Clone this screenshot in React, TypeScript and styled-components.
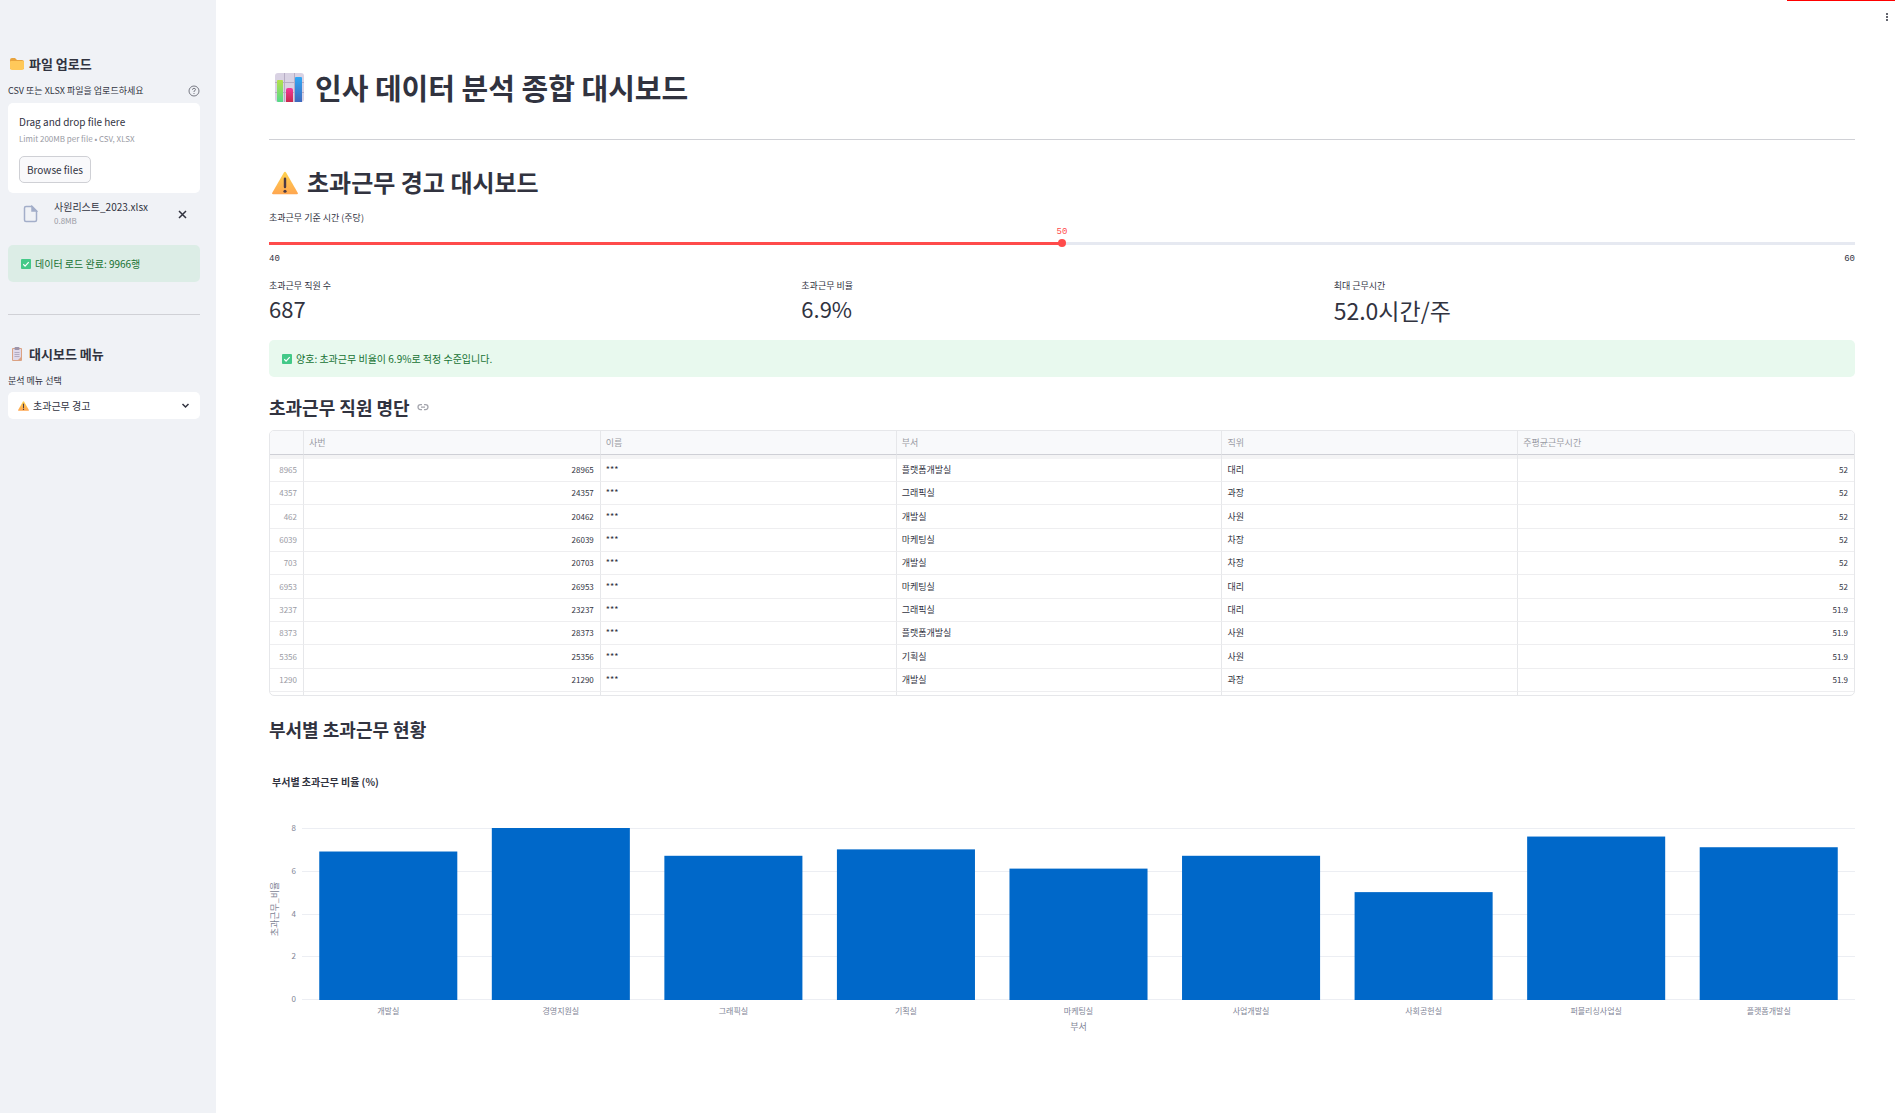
import React, { useState } from "react";
import styled, { createGlobalStyle } from "styled-components";

const ink = "#31333f";
const muted = "#9a9ba4";
const line = "#e6e7ea";
const sans = '"Noto Sans CJK KR", "Noto Sans", sans-serif';

const GlobalStyle = createGlobalStyle`
  *, *::before, *::after { box-sizing: border-box; }
  body { margin: 0; background: #fff; color: ${ink}; font: 10px/16px ${sans}; }
  h1, h2, h3, p { margin: 0; }
  button, input, select { font: inherit; color: inherit; margin: 0; }
`;

const Page = styled.div`
  display: flex;
  min-height: 100vh;
`;

const Sidebar = styled.aside`
  flex: 0 0 216px;
  background: #f0f2f6;
  padding: 54px 16px 0 8px;
`;

const Main = styled.main`
  flex: 1;
  min-width: 0;
  padding: 66px 43px 40px 53px;
`;

const TopBar = styled.div`
  position: absolute;
  top: 0;
  right: 3px;
  width: 108px;
  display: flex;
  justify-content: flex-end;
  border-top: 1px solid #ff0000;
`;

const MenuButton = styled.button`
  border: 0;
  background: none;
  padding: 8px 6px;
  display: flex;
`;

const SideTitle = styled.h2`
  display: flex;
  align-items: center;
  gap: 4px;
  font-size: 13px;
  line-height: 20px;
  font-weight: 700;
`;

const LabelRow = styled.div`
  display: flex;
  justify-content: space-between;
  align-items: center;
  margin-top: 9px;
`;

const FieldLabel = styled.label`
  display: block;
  font-size: 9px;
  line-height: 16px;
`;

const DropZone = styled.div`
  margin-top: 4px;
  height: 90px;
  padding: 11px;
  background: #fff;
  border-radius: 5px;
`;

const DropText = styled.p`
  font-size: 10px;
  line-height: 16px;
`;

const Small = styled.p`
  font-size: 8px;
  line-height: 18px;
  color: ${muted};
`;

const BrowseButton = styled.button`
  display: block;
  margin-top: 8px;
  height: 27px;
  padding: 0 7px;
  background: #f9f9fb;
  border: 1px solid #cfd0d5;
  border-radius: 5px;
  font-size: 10px;
`;

const FileRow = styled.div`
  display: flex;
  align-items: center;
  padding: 7px 11px 0 15px;
  gap: 16px;
`;

const FileInfo = styled.div`
  flex: 1;
`;

const FileName = styled.p`
  font-size: 10px;
  line-height: 14px;
`;

const FileSize = styled.p`
  font-size: 8px;
  line-height: 14px;
  color: ${muted};
`;

const IconButton = styled.button`
  border: 0;
  background: none;
  padding: 0;
  display: flex;
`;

const Notice = styled.div<{ $side?: boolean }>`
  display: flex;
  align-items: center;
  gap: 4px;
  height: 37px;
  padding: 0 13px;
  border-radius: 5px;
  font-size: 10px;
  color: #177233;
  background: ${(p) => (p.$side ? "#dcede6" : "#e8f9ee")};
  margin-top: ${(p) => (p.$side ? 17 : 13)}px;
`;

const Rule = styled.hr<{ $top: number; $bottom: number }>`
  border: 0;
  height: 1px;
  background: #d0d1d6;
  margin: ${(p) => p.$top}px 0 ${(p) => p.$bottom}px;
`;

const SelectBox = styled.div`
  margin-top: 3px;
  height: 27px;
  display: flex;
  align-items: center;
  gap: 4px;
  padding: 0 10px;
  background: #fff;
  border-radius: 5px;
`;

const Select = styled.select`
  flex: 1;
  min-width: 0;
  appearance: none;
  border: 0;
  background: none;
  padding: 0;
  font-size: 10px;
  line-height: 20px;
`;

const Title = styled.h1`
  display: flex;
  align-items: center;
  gap: 8px;
  font-size: 29px;
  line-height: 42px;
  font-weight: 700;
`;

const Section = styled.h2`
  display: flex;
  align-items: center;
  gap: 9px;
  padding-left: 3px;
  font-size: 24px;
  line-height: 36px;
  font-weight: 700;
`;

const SubSection = styled.h3<{ $top: number }>`
  display: flex;
  align-items: center;
  gap: 7px;
  margin-top: ${(p) => p.$top}px;
  font-size: 18px;
  line-height: 28px;
  font-weight: 700;
`;

const SliderBlock = styled.div`
  margin-top: 10px;
`;

const SliderValue = styled.output`
  display: block;
  text-align: center;
  font: 9px/12px "Liberation Mono", monospace;
  color: #ff4b4b;
`;

const Slider = styled.input<{ $fill: number }>`
  display: block;
  width: 100%;
  height: 8px;
  margin: 1px 0 4px;
  appearance: none;
  background: linear-gradient(to right, #ff4b4b ${(p) => p.$fill}%, #e6e9f1 ${(p) => p.$fill}%) center / 100% 3px no-repeat;
  &::-webkit-slider-thumb {
    appearance: none;
    width: 8px;
    height: 8px;
    border-radius: 50%;
    background: #ff4b4b;
  }
`;

const SliderEnds = styled.div`
  display: flex;
  justify-content: space-between;
  font: 9px/16px "Liberation Mono", monospace;
`;

const Metrics = styled.div`
  display: grid;
  grid-template-columns: repeat(3, 1fr);
  gap: 11px;
  margin-top: 11px;
`;

const MetricLabel = styled.p`
  font-size: 9px;
  line-height: 16px;
`;

const MetricValue = styled.p<{ $hangul: boolean }>`
  font-size: ${(p) => (p.$hangul ? 23 : 22)}px;
  line-height: ${(p) => (p.$hangul ? 33 : 28)}px;
`;

const Grid = styled.div`
  margin-top: 9px;
  height: 266px;
  overflow: hidden;
  border: 1px solid ${line};
  border-radius: 5px;
`;

const Table = styled.table`
  width: 100%;
  table-layout: fixed;
  border-collapse: separate;
  border-spacing: 0;
`;

const HeadCell = styled.th`
  height: 24px;
  padding: 0 5px;
  text-align: left;
  font-size: 9px;
  line-height: 16px;
  font-weight: 400;
  color: ${muted};
  background: #f8f9fb;
  border-bottom: 1px solid #cfd0d6;
  &:not(:last-child) { border-right: 1px solid ${line}; }
`;

const Row = styled.tr`
  height: 23px;
  &:nth-child(3n) { height: 24px; }
  &:first-child { height: 27px; }
  &:first-child td { padding-top: 4px; box-shadow: inset 0 4px 0 #f4f4f5; }
`;

const Cell = styled.td<{ $right?: boolean; $muted?: boolean }>`
  padding: 0 ${(p) => (p.$right ? 6 : 5)}px;
  font-size: ${(p) => (p.$right ? 8 : 9)}px;
  line-height: 16px;
  text-align: ${(p) => (p.$right ? "right" : "left")};
  color: ${(p) => (p.$muted ? muted : ink)};
  border-bottom: 1px solid #eeeef0;
  &:not(:last-child) { border-right: 1px solid ${line}; }
`;

const ChartTitle = styled.p`
  margin-top: 29px;
  padding-left: 3px;
  font-size: 10px;
  line-height: 20px;
  font-weight: 700;
`;

const Chart = styled.svg`
  display: block;
  width: 100%;
  height: 250px;
  margin-top: 20px;
  overflow: visible;
  font-family: ${sans};
  fill: #808495;
`;

const ChartIcon = () => (
  <svg width="38" height="36" viewBox="0 0 38 36" aria-hidden="true">
    <defs>
      <linearGradient id="green" x2="0" y2="1"><stop stopColor="#b5e04a" /><stop offset="1" stopColor="#55d98a" /></linearGradient>
      <linearGradient id="pink" x2="0" y2="1"><stop stopColor="#f3379a" /><stop offset="1" stopColor="#c9294c" /></linearGradient>
      <linearGradient id="blue" x2="0" y2="1"><stop stopColor="#31a8f5" /><stop offset="1" stopColor="#3f68bd" /></linearGradient>
    </defs>
    <rect x="6" y="4" width="29" height="29" rx="3" fill="#d9d2e3" />
    <path d="M15.500 4v29M25.500 4v29M6 13.500h29M6 23.500h29" stroke="#b6adc4" />
    <path d="M8 12q0-1 1-1h4q1 0 1 1v21H9q-1 0-1-1z" fill="url(#green)" />
    <path d="M17 21q0-2 2-2h3q2 0 2 2v12h-7z" fill="url(#pink)" />
    <path d="M26 9q0-1 1-1h5q1 0 1 1v24h-7z" fill="url(#blue)" />
  </svg>
);

const WarningIcon = ({ size }: { size: number }) => (
  <svg width={size} height={size} viewBox="2 2 28 28" aria-hidden="true">
    <defs>
      <linearGradient id="amber" x2="0" y2="1"><stop stopColor="#ffd24f" /><stop offset="1" stopColor="#ffa650" /></linearGradient>
    </defs>
    <path d="M14.700 6q1.300-2 2.600 0L29.700 27.500q.8 1.700-1 1.700H3.300q-1.800 0-1-1.700z" fill="url(#amber)" />
    <path d="M16 12.500v9" stroke="#4d3b45" strokeWidth="2.600" strokeLinecap="round" />
    <circle cx="16" cy="26" r="1.700" fill="#4d3b45" />
  </svg>
);

const CheckIcon = () => (
  <svg width="10" height="10" viewBox="0 0 11 11" aria-hidden="true">
    <rect width="11" height="11" rx="1" fill="#43c988" />
    <path d="M2.500 5.800l2 2 4-4.300" fill="none" stroke="#fff" strokeWidth="1.300" />
  </svg>
);

const FolderIcon = () => (
  <svg width="17" height="16" viewBox="0 0 17 16" aria-hidden="true">
    <path d="M2 4q0-2 2-2h3l2 2h5q2 0 2 2v7H2z" fill="#e8a33d" />
    <path d="M2 6q0-1 1-1h12q1 0 1 1v6q0 2-2 2H4q-2 0-2-2z" fill="#ffc95a" />
  </svg>
);

const ClipboardIcon = () => (
  <svg width="17" height="16" viewBox="0 0 17 16" aria-hidden="true">
    <rect x="4" y="2" width="10" height="13" rx="1" fill="#dba283" />
    <path d="M5 3h8v8l-3 3H5z" fill="#e0d9ea" />
    <path d="M6.500 6.500h5M6.500 8.500h5M6.500 10.500h5" stroke="#b3abc2" />
    <rect x="6.500" y="1" width="5" height="3" rx="1" fill="#9c94aa" />
  </svg>
);

const HelpIcon = () => (
  <svg width="12" height="12" viewBox="0 0 12 12" fill="none" stroke="#777983" role="img" aria-label="도움말">
    <circle cx="6" cy="6" r="5" />
    <path d="M4.500 4.800q0-1.500 1.500-1.500t1.500 1.400Q7.500 5.500 6 6.200V7M6 8v1" />
  </svg>
);

const FileIcon = () => (
  <svg width="15" height="18" viewBox="0 0 15 18" fill="none" stroke="#a3aec9" strokeWidth="1.500" aria-hidden="true">
    <path d="M3 1.500h6l4.500 4.500v9q0 1.500-1.500 1.500H3q-1.500 0-1.500-1.500V3q0-1.500 1.500-1.500z" />
    <path d="M9 1.500v4.500h4.500z" fill="#a3aec9" />
  </svg>
);

const LinkIcon = () => (
  <svg width="12" height="12" viewBox="0 0 24 24" fill="none" stroke="#a3a4ac" strokeWidth="2.500" aria-hidden="true">
    <path d="M10 7H7a5 5 0 0 0 0 10h3M14 7h3a5 5 0 0 1 0 10h-3M8 12h8" />
  </svg>
);

const columns = ["사번", "이름", "부서", "직위", "주평균근무시간"];

const rows: [string, string, string, string][] = [
  ["8965", "플랫폼개발실", "대리", "52"],
  ["4357", "그래픽실", "과장", "52"],
  ["462", "개발실", "사원", "52"],
  ["6039", "마케팅실", "차장", "52"],
  ["703", "개발실", "차장", "52"],
  ["6953", "마케팅실", "대리", "52"],
  ["3237", "그래픽실", "대리", "51.9"],
  ["8373", "플랫폼개발실", "사원", "51.9"],
  ["5356", "기획실", "사원", "51.9"],
  ["1290", "개발실", "과장", "51.9"],
];

const departments: [string, number][] = [
  ["개발실", 6.9],
  ["경영지원실", 8],
  ["그래픽실", 6.7],
  ["기획실", 7],
  ["마케팅실", 6.1],
  ["사업개발실", 6.7],
  ["사회공헌실", 5],
  ["퍼블리싱사업실", 7.6],
  ["플랫폼개발실", 7.1],
];

const metrics = [
  { label: "초과근무 직원 수", value: "687", hangul: false },
  { label: "초과근무 비율", value: "6.9%", hangul: false },
  { label: "최대 근무시간", value: "52.0시간/주", hangul: true },
];

const BASE = 187;
const UNIT = 171 / 8;
const PLOT_LEFT = (33 / 1586) * 100;
const STEP = (100 - PLOT_LEFT) / departments.length;

const BarChart = () => (
  <Chart role="img" aria-label="부서별 초과근무 비율 (%)">
    {[0, 2, 4, 6, 8].map((tick) => {
      const y = Math.round(BASE - tick * UNIT);
      return (
        <g key={tick}>
          <rect x={`${PLOT_LEFT}%`} y={y} width={`${100 - PLOT_LEFT}%`} height="1" fill="#eceef3" />
          <text x="27" y={y + 3} fontSize="8" textAnchor="end">{tick}</text>
        </g>
      );
    })}
    {departments.map(([name, value], i) => (
      <g key={name}>
        <rect
          x={`${PLOT_LEFT + STEP * (i + 0.1)}%`}
          y={BASE - value * UNIT}
          width={`${STEP * 0.8}%`}
          height={value * UNIT + 1}
          fill="#0068c9"
        />
        <text x={`${PLOT_LEFT + STEP * (i + 0.5)}%`} y={BASE + 15} fontSize="8" textAnchor="middle">{name}</text>
      </g>
    ))}
    <text x={`${PLOT_LEFT + (100 - PLOT_LEFT) / 2}%`} y={BASE + 31} fontSize="9" textAnchor="middle">부서</text>
    <text transform="translate(9 97) rotate(-90)" fontSize="9" textAnchor="middle">초과근무_비율</text>
  </Chart>
);

export default function App() {
  const [hours, setHours] = useState(50);
  return (
    <Page>
      <GlobalStyle />
      <Sidebar>
        <SideTitle><FolderIcon />파일 업로드</SideTitle>
        <LabelRow>
          <FieldLabel htmlFor="browse">CSV 또는 XLSX 파일을 업로드하세요</FieldLabel>
          <HelpIcon />
        </LabelRow>
        <DropZone>
          <DropText>Drag and drop file here</DropText>
          <Small>Limit 200MB per file • CSV, XLSX</Small>
          <BrowseButton id="browse" type="button">Browse files</BrowseButton>
        </DropZone>
        <FileRow>
          <FileIcon />
          <FileInfo>
            <FileName>사원리스트_2023.xlsx</FileName>
            <FileSize>0.8MB</FileSize>
          </FileInfo>
          <IconButton type="button" aria-label="파일 제거">
            <svg width="13" height="13" viewBox="0 0 13 13" stroke={ink} strokeWidth="1.500"><path d="M3 3l7 7M10 3l-7 7" /></svg>
          </IconButton>
        </FileRow>
        <Notice $side><CheckIcon />데이터 로드 완료: 9966행</Notice>
        <Rule $top={32} $bottom={29} />
        <SideTitle><ClipboardIcon />대시보드 메뉴</SideTitle>
        <LabelRow>
          <FieldLabel htmlFor="menu">분석 메뉴 선택</FieldLabel>
        </LabelRow>
        <SelectBox>
          <WarningIcon size={11} />
          <Select id="menu" defaultValue="overtime">
            <option value="overtime">초과근무 경고</option>
          </Select>
          <svg width="9" height="9" viewBox="0 0 9 9" fill="none" stroke={ink} strokeWidth="1.500" aria-hidden="true"><path d="M1.500 3l3 3 3-3" /></svg>
        </SelectBox>
      </Sidebar>

      <Main>
        <TopBar>
          <MenuButton type="button" aria-label="메뉴">
            <svg width="4" height="16" viewBox="0 0 4 16" fill={ink}>
              <circle cx="2" cy="5" r="1" /><circle cx="2" cy="8" r="1" /><circle cx="2" cy="11" r="1" />
            </svg>
          </MenuButton>
        </TopBar>
        <Title><ChartIcon />인사 데이터 분석 종합 대시보드</Title>
        <Rule $top={31} $bottom={24} />
        <Section><WarningIcon size={26} />초과근무 경고 대시보드</Section>
        <SliderBlock>
          <FieldLabel htmlFor="hours">초과근무 기준 시간 (주당)</FieldLabel>
          <SliderValue htmlFor="hours">{hours}</SliderValue>
          <Slider
            id="hours"
            type="range"
            min={40}
            max={60}
            value={hours}
            $fill={(hours - 40) * 5}
            onChange={(e) => setHours(Number(e.target.value))}
          />
          <SliderEnds><span>40</span><span>60</span></SliderEnds>
        </SliderBlock>
        <Metrics>
          {metrics.map(({ label, value, hangul }) => (
            <div key={label}>
              <MetricLabel>{label}</MetricLabel>
              <MetricValue $hangul={hangul}>{value}</MetricValue>
            </div>
          ))}
        </Metrics>
        <Notice><CheckIcon />양호: 초과근무 비율이 6.9%로 적정 수준입니다.</Notice>
        <SubSection $top={16}>초과근무 직원 명단<LinkIcon /></SubSection>
        <Grid>
          <Table>
            <colgroup>
              <col style={{ width: 34 }} />
              {[297, 296, 326, 296, 336].map((w, i) => (
                <col key={i} style={{ width: `${(w / 1585) * 100}%` }} />
              ))}
            </colgroup>
            <thead>
              <tr>
                <HeadCell aria-label="번호" />
                {columns.map((name) => <HeadCell key={name}>{name}</HeadCell>)}
              </tr>
            </thead>
            <tbody>
              {rows.map(([index, department, rank, time]) => (
                <Row key={index}>
                  <Cell $right $muted>{index}</Cell>
                  <Cell $right>{20000 + Number(index)}</Cell>
                  <Cell>***</Cell>
                  <Cell>{department}</Cell>
                  <Cell>{rank}</Cell>
                  <Cell $right>{time}</Cell>
                </Row>
              ))}
              <Row>
                {["a", "b", "c", "d", "e", "f"].map((k) => <Cell key={k} />)}
              </Row>
            </tbody>
          </Table>
        </Grid>
        <SubSection $top={19}>부서별 초과근무 현황</SubSection>
        <ChartTitle>부서별 초과근무 비율 (%)</ChartTitle>
        <BarChart />
      </Main>
    </Page>
  );
}
